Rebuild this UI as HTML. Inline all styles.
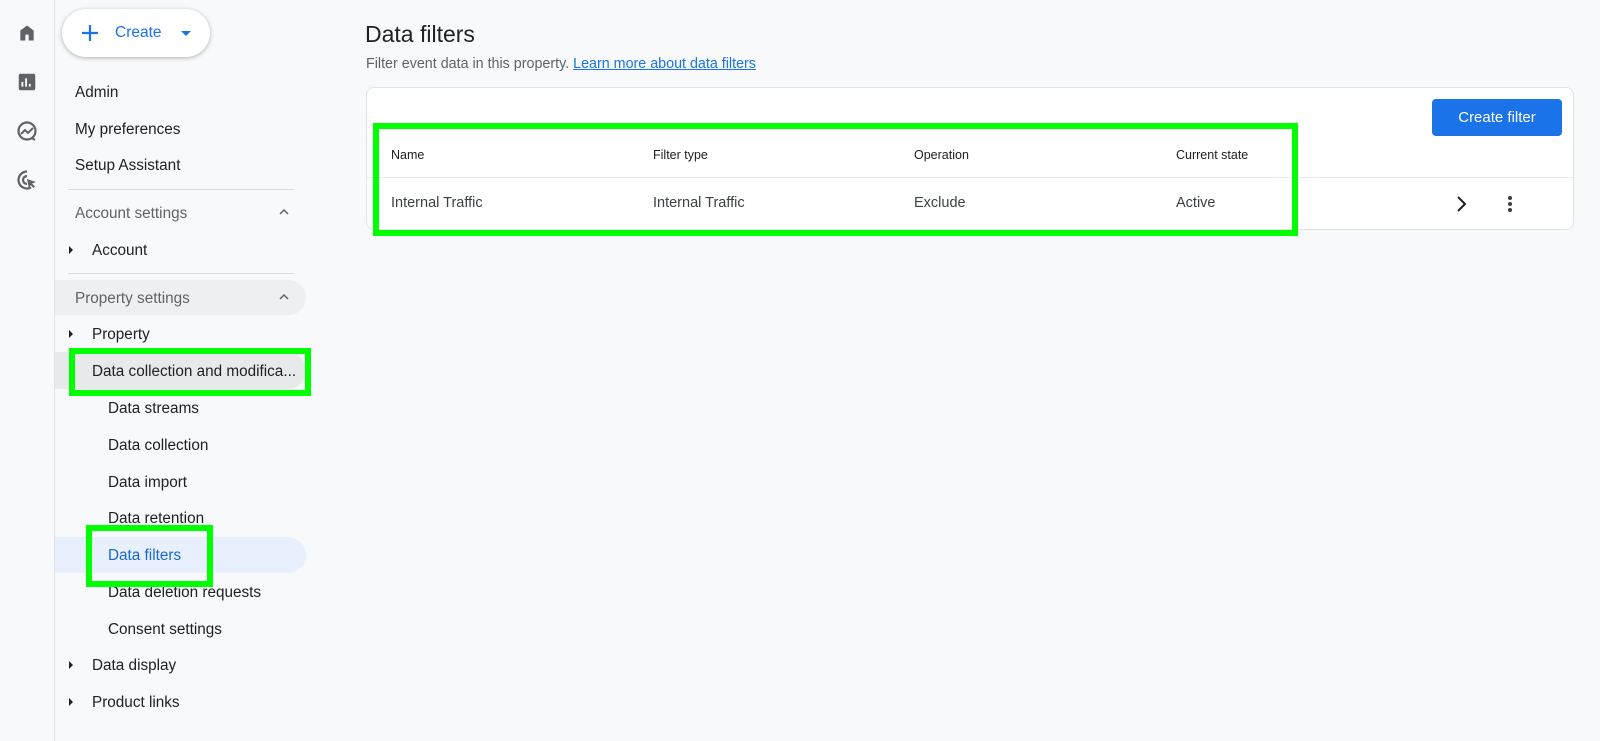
<!DOCTYPE html>
<html><head><style>
*{margin:0;padding:0;box-sizing:border-box}
body{width:1600px;height:741px;background:#f8f9fa;font-family:"Liberation Sans",Arial,sans-serif;color:#202124;position:relative;overflow:hidden}
.a{position:absolute;white-space:nowrap}
.rail{position:absolute;left:0;top:0;width:55px;height:741px;border-right:1px solid #e3e3e3;background:#f8f9fa}
.nav{font-size:15.3px;line-height:20px;transform:translateY(-9px)}
.g{border:6px solid #00ff00;position:absolute}
.th{font-size:12.5px;color:#202124;transform:translateY(-8px)}
.td{font-size:14.5px;color:#3c4043;transform:translateY(-9px)}
.tri{position:absolute;width:0;height:0;border-top:4px solid transparent;border-bottom:4px solid transparent;border-left:4px solid #202124}
</style></head><body>
<div class="rail"></div>
<svg class="a" style="left:17px;top:23px" width="20" height="20" viewBox="0 0 24 24"><path d="M4 21V9l8-6 8 6v12h-6v-7h-4v7z" fill="#5f6368"/></svg>
<svg class="a" style="left:16px;top:71px" width="22" height="22" viewBox="0 0 24 24"><rect x="3" y="3" width="18" height="18" rx="2" fill="#5f6368"/><path d="M7 17v-5M11 17V8M15 17v-3" stroke="#fff" stroke-width="2"/></svg>
<svg class="a" style="left:15px;top:119px" width="24" height="24" viewBox="0 0 24 24"><circle cx="12" cy="12" r="8.5" fill="none" stroke="#5f6368" stroke-width="2.2"/><path d="M6 15l4-4 3 3 5-5" fill="none" stroke="#5f6368" stroke-width="2"/><path d="M17 19l3 2" stroke="#5f6368" stroke-width="2"/></svg>
<svg class="a" style="left:15px;top:168px" width="24" height="24" viewBox="0 0 24 24"><path d="M12 3.5a8.5 8.5 0 1 0 4 16" fill="none" stroke="#5f6368" stroke-width="2.2"/><path d="M12 8a4 4 0 1 0 0 8" fill="none" stroke="#5f6368" stroke-width="2.2"/><path d="M12 11l9 3-4 1.5 3 3-1.5 1.5-3-3L14 21z" fill="#5f6368"/></svg>

<div class="a" style="left:62px;top:9px;width:148px;height:48px;border-radius:24px;background:#fff;box-shadow:0 1px 4px rgba(0,0,0,.3)"></div>
<svg class="a" style="left:80px;top:23px" width="20" height="20" viewBox="0 0 20 20"><path d="M10 2v16M2 10h16" stroke="#1a73e8" stroke-width="2.2"/></svg>
<div class="a" style="left:115px;top:24px;font-size:15.5px;color:#1a73e8">Create</div>
<div class="a" style="left:181px;top:31px;border-left:5px solid transparent;border-right:5px solid transparent;border-top:5px solid #1a73e8"></div>

<div class="a nav" style="left:75px;top:92px">Admin</div>
<div class="a nav" style="left:75px;top:129px">My preferences</div>
<div class="a nav" style="left:75px;top:165px">Setup Assistant</div>
<div class="a" style="left:68px;top:189px;width:226px;border-top:1px solid #dadce0"></div>
<div class="a nav" style="left:75px;top:213px;color:#5f6368">Account settings</div>
<svg class="a" style="left:278px;top:207px" width="12" height="10" viewBox="0 0 12 10"><path d="M2 7l4-4 4 4" fill="none" stroke="#5f6368" stroke-width="1.5"/></svg>
<div class="tri" style="left:69px;top:246px"></div>
<div class="a nav" style="left:92px;top:250px">Account</div>
<div class="a" style="left:68px;top:273px;width:226px;border-top:1px solid #dadce0"></div>
<div class="a" style="left:55px;top:280px;width:251px;height:35px;background:#eeeff1;border-radius:0 18px 18px 0"></div>
<div class="a nav" style="left:75px;top:298px;color:#5f6368">Property settings</div>
<svg class="a" style="left:278px;top:292px" width="12" height="10" viewBox="0 0 12 10"><path d="M2 7l4-4 4 4" fill="none" stroke="#5f6368" stroke-width="1.5"/></svg>
<div class="tri" style="left:69px;top:330px"></div>
<div class="a nav" style="left:92px;top:334px">Property</div>
<div class="a" style="left:55px;top:352px;width:251px;height:37px;background:#e8e9eb;border-radius:0 18px 18px 0"></div>
<div class="a nav" style="left:92px;top:371px">Data collection and modifica...</div>
<div class="a nav" style="left:108px;top:408px">Data streams</div>
<div class="a nav" style="left:108px;top:445px">Data collection</div>
<div class="a nav" style="left:108px;top:482px">Data import</div>
<div class="a nav" style="left:108px;top:518px">Data retention</div>
<div class="a" style="left:55px;top:537px;width:251px;height:36px;background:#e8f0fe;border-radius:0 18px 18px 0"></div>
<div class="a nav" style="left:108px;top:555px;color:#1967d2">Data filters</div>
<div class="a nav" style="left:108px;top:592px">Data deletion requests</div>
<div class="a nav" style="left:108px;top:629px">Consent settings</div>
<div class="tri" style="left:69px;top:661px"></div>
<div class="a nav" style="left:92px;top:665px">Data display</div>
<div class="tri" style="left:69px;top:698px"></div>
<div class="a nav" style="left:92px;top:702px">Product links</div>

<div class="g" style="left:69px;top:348px;width:242px;height:48px"></div>
<div class="g" style="left:86px;top:525px;width:127px;height:62px"></div>

<div class="a" style="left:365px;top:21px;font-size:23px;color:#202124">Data filters</div>
<div class="a" style="left:366px;top:56px;font-size:14.3px;color:#5f6368">Filter event data in this property. <span style="color:#1a73e8;text-decoration:underline">Learn more about data filters</span></div>

<div class="a" style="left:366px;top:87px;width:1208px;height:143px;background:#fff;border:1px solid #e3e3e3;border-radius:8px"></div>
<div class="a" style="left:1432px;top:99px;width:130px;height:37px;background:#1a73e8;border-radius:4px;color:#fff;font-size:15px;text-align:center;line-height:37px">Create filter</div>
<div class="a" style="left:367px;top:177px;width:1206px;border-top:1px solid #e8eaed"></div>
<div class="a th" style="left:391px;top:156px">Name</div>
<div class="a th" style="left:653px;top:156px">Filter type</div>
<div class="a th" style="left:914px;top:156px">Operation</div>
<div class="a th" style="left:1176px;top:156px">Current state</div>
<div class="a td" style="left:391px;top:204px">Internal Traffic</div>
<div class="a td" style="left:653px;top:204px">Internal Traffic</div>
<div class="a td" style="left:914px;top:204px">Exclude</div>
<div class="a td" style="left:1176px;top:204px">Active</div>
<svg class="a" style="left:1455px;top:194px" width="14" height="20" viewBox="0 0 14 20"><path d="M3 3l7 7-7 7" fill="none" stroke="#202124" stroke-width="2"/></svg>
<svg class="a" style="left:1506px;top:194px" width="8" height="20" viewBox="0 0 8 20"><circle cx="4" cy="4" r="2" fill="#3c4043"/><circle cx="4" cy="10" r="2" fill="#3c4043"/><circle cx="4" cy="16" r="2" fill="#3c4043"/></svg>

<div class="g" style="left:373px;top:123px;width:925px;height:113px"></div>
</body></html>
